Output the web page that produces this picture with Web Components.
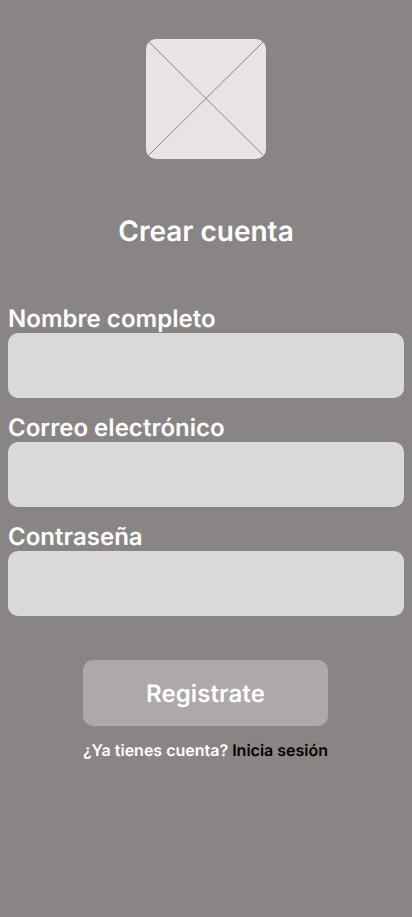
<!DOCTYPE html>
<html lang="es">
<head>
<meta charset="utf-8">
<title>Crear cuenta</title>
<style>
html, body { margin: 0; height: 100%; background: #898584; }
body { text-rendering: geometricPrecision; }
</style>
</head>
<body>
<signup-screen></signup-screen>
<script>
const define = (name, html) => customElements.define(name, class extends HTMLElement {
  constructor() {
    super();
    const t = document.createElement('template');
    t.innerHTML = html;
    this.attachShadow({ mode: 'open' }).append(t.content.cloneNode(true));
  }
});

define('logo-placeholder', `
<style>
:host { display: block; width: 120px; height: 120px; border-radius: 10px; overflow: hidden; background: #e7e4e3; }
svg { display: block; }
</style>
<svg width="120" height="120" viewBox="0 0 120 120" fill="none" stroke="#898584"><path d="M2.5 2.5L117.5 116.5M117.5 2.5L2.5 116.5"/></svg>`);

define('form-field', `
<style>
:host { display: block; }
label { display: block; font: 600 24px/29px Inter, sans-serif; letter-spacing: .03px; white-space: nowrap; }
input { display: block; box-sizing: border-box; width: 100%; height: 65px; margin: 0; padding: 0 16px; border: 0; border-radius: 10px; background: #d9d9d9; font: 400 20px Inter, sans-serif; }
</style>
<label for="field"><slot></slot></label><input id="field">`);

define('primary-button', `
<style>
:host { display: block; }
button { display: block; width: 100%; height: 66px; padding: 0; border: 0; border-radius: 10px; background: #aea9a8; color: #fff; font: 600 24px/29px Inter, sans-serif; letter-spacing: .1px; text-rendering: inherit; }
</style>
<button><slot></slot></button>`);

define('login-prompt', `
<style>
:host { display: block; font: 600 16px/19px Inter, sans-serif; white-space: nowrap; text-align: center; }
::slotted(a) { color: #000; text-decoration: none; }
</style>
<slot></slot>`);

define('signup-screen', `
<style>
:host { display: flex; flex-direction: column; align-items: center; box-sizing: border-box; height: 100vh; padding: 39px 8px 0; background: #898584; color: #fff; font-family: Inter, sans-serif; overflow: hidden; }
h1 { margin: 55px 0 56px; font: 600 28px/34px Inter, sans-serif; }
form { display: grid; gap: 15px; width: 100%; }
primary-button { width: 245px; margin: 44px 1px 15px 0; }
login-prompt { margin-right: 1px; }
</style>
<logo-placeholder></logo-placeholder>
<h1>Crear cuenta</h1>
<form>
<form-field>Nombre completo</form-field>
<form-field>Correo electrónico</form-field>
<form-field>Contraseña</form-field>
</form>
<primary-button>Registrate</primary-button>
<login-prompt>¿Ya tienes cuenta? <a href="#">Inicia sesión</a></login-prompt>`);
</script>
</body>
</html>
